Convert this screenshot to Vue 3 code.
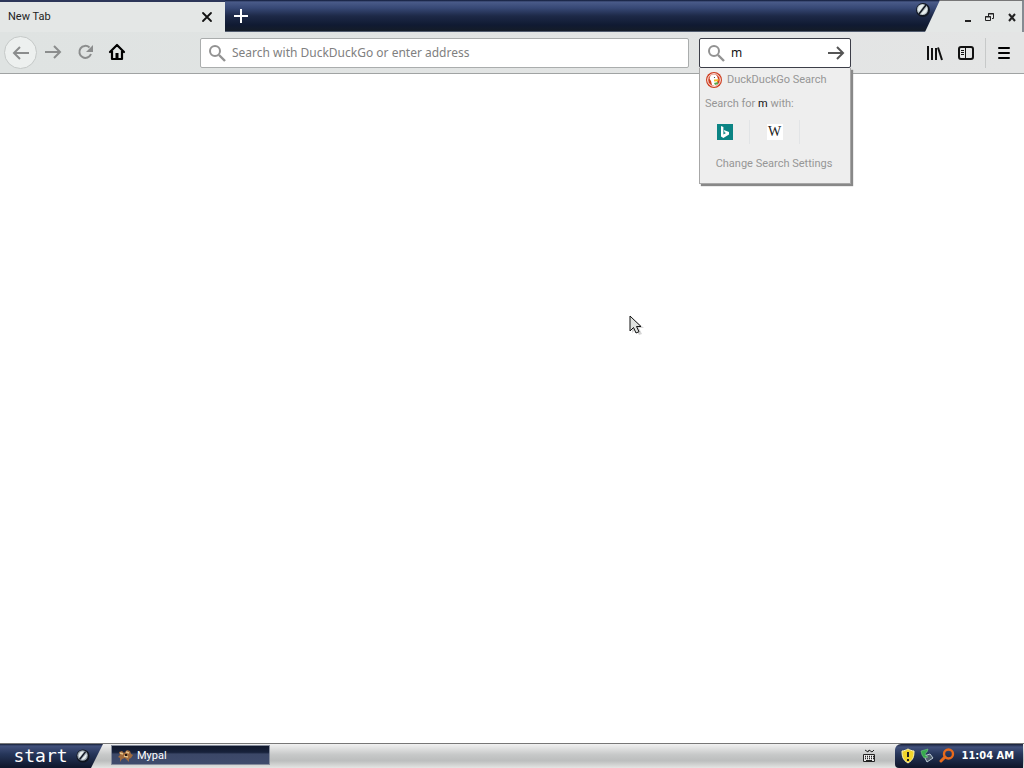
<script setup>
import { ref } from 'vue'
const address = ref('')
const query = ref('m')
</script>

<template>
  <div class="desktop">
    <main class="browser">
      <header class="titlebar">
        <div class="tab">
          <span>New Tab</span>
          <button class="tab-close" aria-label="Close tab">
            <svg width="12" height="12" viewBox="0 0 12 12"><path d="M2 2l8 8M10 2l-8 8" stroke="#111" stroke-width="1.8" stroke-linecap="round" /></svg>
          </button>
        </div>
        <div class="strip">
          <button class="new-tab" aria-label="Open a new tab">
            <svg width="16" height="16" viewBox="0 0 16 16"><path d="M8 1v14M1 8h14" stroke="#fff" stroke-width="2" /></svg>
          </button>
          <svg class="emblem" width="16" height="16" viewBox="0 0 16 16">
            <circle cx="8" cy="8" r="7" fill="#111723" />
            <circle cx="7.5" cy="7.5" r="5.5" fill="#b9c3c6" />
            <path d="M3 8C3 4 6 2 9 3L4 10zM6 12l6-7c1 4-2 8-6 7z" fill="#e8eeee" />
            <path d="M4 12L11 3" stroke="#10151f" stroke-width="1.5" />
          </svg>
        </div>
        <div class="window-buttons">
          <button aria-label="Minimize"><svg width="12" height="12" viewBox="0 0 12 12"><path d="M3 9h6" stroke="#222" stroke-width="2" /></svg></button>
          <button aria-label="Restore"><svg width="12" height="12" viewBox="0 0 12 12" fill="none" stroke="#222"><path d="M4.500 4V1.500h5v5H8M4 2h6" /><path d="M1.500 4.500h5v4h-5zM1 5h6" /></svg></button>
          <button aria-label="Close"><svg width="12" height="12" viewBox="0 0 12 12"><path d="M3 2l6 7M9 2L3 9" stroke="#222" stroke-width="2" /></svg></button>
        </div>
      </header>

      <nav class="toolbar">
        <div class="nav-buttons">
          <button class="back" aria-label="Back">
            <svg width="18" height="18" viewBox="0 0 18 18"><path d="M17 9H2M8 3L2 9l6 6" /></svg>
          </button>
          <button aria-label="Forward">
            <svg width="18" height="18" viewBox="0 0 18 18"><path d="M1 9h15M10 3l6 6-6 6" /></svg>
          </button>
          <button aria-label="Reload">
            <svg width="18" height="18" viewBox="0 0 18 18"><path d="M15 11a6 6 0 1 1-1.500-6.500" /><path d="M17 2v7h-7z" fill="#8b8d8d" stroke="none" /></svg>
          </button>
          <button aria-label="Home">
            <svg width="18" height="18" viewBox="0 0 18 18"><path d="M2 9l7-7 7 7M4 8v8h10V8" stroke="#000" stroke-width="2.200" stroke-linejoin="round" stroke-linecap="round" /><path d="M7.500 15v-5h3v5z" fill="#000" stroke="none" /></svg>
          </button>
        </div>
        <label class="field address">
          <svg width="18" height="18" viewBox="0 0 18 18"><circle cx="7" cy="7" r="5" /><path d="M11 11l6 6" stroke-width="2.400" /></svg>
          <input v-model="address" type="text" placeholder="Search with DuckDuckGo or enter address" aria-label="Address" />
        </label>
        <div class="search">
          <div class="field search-field">
            <svg width="18" height="18" viewBox="0 0 18 18"><circle cx="7" cy="7" r="5" /><path d="M11 11l6 6" stroke-width="2.400" /></svg>
            <input v-model="query" type="text" aria-label="Search" />
            <button class="go" aria-label="Go">
              <svg width="18" height="18" viewBox="0 0 18 18"><path d="M1 9h15M10 3l6 6-6 6" stroke="#555" stroke-width="2" /></svg>
            </button>
          </div>
          <section class="popup">
            <div class="engine">
              <svg width="16" height="16" viewBox="0 0 16 16">
                <circle cx="8" cy="8" r="8" fill="#cf3e20" />
                <circle cx="8" cy="8" r="6.300" fill="none" stroke="#fff" stroke-width="1" />
                <path d="M4 5c1-3 5-3 7-1l1 3-1 2 1 3-3 2-3-1-1-4c-1-1-2-3-1-4z" fill="#fff" />
                <path d="M8 7.500l5-.3-1 2-4 .3z" fill="#f6bd28" /><path d="M8 11l4-1v2l-3 1z" fill="#55a94b" />
                <circle cx="8.500" cy="5.500" r=".6" fill="#234" />
              </svg>
              <span>DuckDuckGo Search</span>
            </div>
            <p class="search-for">Search for <b>m</b> with:</p>
            <div class="engines">
              <button aria-label="Bing">
                <svg width="16" height="16" viewBox="0 0 16 16"><path d="M0 0h16v16H0z" fill="#0b8484" /><path d="M4 2l2.400.9v7.600L9 9 7.500 8.300 6.800 6 12 8v2.600L6.400 14 4 12.500z" fill="#fff" /></svg>
              </button>
              <button aria-label="Wikipedia"><span class="wiki">W</span></button>
            </div>
            <button class="settings">Change Search Settings</button>
          </section>
        </div>
        <div class="tools">
          <button aria-label="Library"><svg width="18" height="18" viewBox="0 0 18 18"><path d="M3 2v14M7 4v12M11 4v12M13 3.500L17 16" stroke="#111" stroke-width="2" /></svg></button>
          <button aria-label="Sidebars"><svg width="18" height="18" viewBox="0 0 18 18"><rect x="2" y="3" width="14" height="12" rx="2" stroke="#111" stroke-width="2" /><path d="M8.500 3v12" stroke="#111" stroke-width="1" /><path d="M4 6.500h3M4 8.500h3M4 10.500h3" stroke="#111" stroke-width="1" /></svg></button>
          <button class="menu" aria-label="Menu"><svg width="18" height="18" viewBox="0 0 18 18"><path d="M4 4h10M4 9h10M4 14h10" stroke="#000" stroke-width="2" stroke-linecap="round" /></svg></button>
        </div>
      </nav>

      <div class="page">
        <svg class="cursor" width="18" height="22" viewBox="0 0 18 22">
          <path d="M3 3v15l4-4 3 6 3-1-3-6h5z" fill="#888" opacity=".35" />
          <path d="M1 1v15l3.500-3.500L7 18l3-1.300-2.500-5.200H12z" fill="#dfe2df" stroke="#111" />
        </svg>
      </div>
    </main>

    <footer class="taskbar">
      <button class="start">
        <span>start</span>
        <svg width="14" height="14" viewBox="0 0 16 16">
          <circle cx="8" cy="8" r="7.500" fill="#10151f" />
          <circle cx="7.500" cy="7.500" r="6" fill="#9ba6b0" />
          <path d="M3 8C3 4 6 2 9 3L4 10zM6 12l6-7c1 4-2 8-6 7z" fill="#e8eeee" />
          <path d="M4 12L11 3" stroke="#10151f" stroke-width="1.500" />
        </svg>
      </button>
      <button class="task">
        <svg width="16" height="14" viewBox="0 0 16 14">
          <path d="M1 3l3-1 2 2 3-3 3 1 1 3 2 1-2 3-2 1v3l-2-2-2-2-3 1-2 3v-4l-2-1 2-2z" fill="#a06a3c" />
          <path d="M2 4l3 1M8 3l3 1M6 7l4 1" stroke="#e7c48a" stroke-width="1.500" /><path d="M7 5h2v2H7z" fill="#241814" />
        </svg>
        <span>Mypal</span>
      </button>
      <button class="keyboard" aria-label="Keyboard layout">
        <svg width="14" height="14" viewBox="0 0 14 14" fill="none" stroke="#222">
          <path d="M3 1l3 2 1-2 3 2 2-2" /><path d="M1.500 5.500h11v7h-11z" fill="#eee" /><path d="M3 7.500h9M3 9.500h9" stroke-dasharray="1 1" stroke-width="1.500" /><path d="M4 11.500h6" />
        </svg>
      </button>
      <div class="tray">
        <svg width="14" height="16" viewBox="0 0 14 16"><path d="M7 1c2 1 4 2 6 2 0 6-1 9-6 12C2 12 1 9 1 3c2 0 4-1 6-2z" fill="#f2d52c" stroke="#fff5b0" /><path d="M7 4v5M7 11v2" stroke="#222" stroke-width="2" /></svg>
        <svg width="16" height="16" viewBox="0 0 16 16"><path d="M5 8l6-2 3 4-6 4z" fill="#52616f" stroke="#bccbd7" /><path d="M2 3l7-2-1 3c-2 1-2 2-1 4l2 1-4 1-2-3z" fill="#36aa4d" stroke="#83d28a" stroke-width=".5" /></svg>
        <svg width="16" height="16" viewBox="0 0 16 16" fill="none" stroke="#e96a1b"><circle cx="9.500" cy="6" r="4.500" stroke-width="2.400" /><path d="M6 9l-4 4" stroke-width="3" stroke-linecap="round" /></svg>
        <time>11:04 AM</time>
      </div>
    </footer>
  </div>
</template>

<style>
body { margin: 0; }
</style>

<style scoped>
* { box-sizing: border-box; }
.desktop { display: flex; flex-direction: column; min-height: 100vh; background: #fff; color: #222; font: 11px/14px Roboto, sans-serif; }
button { display: flex; align-items: center; justify-content: center; padding: 0; border: 0; background: none; color: inherit; font: inherit; }
svg { flex: none; }
.browser { flex: 1; display: flex; flex-direction: column; }
.titlebar { display: flex; height: 32px; background: #e4e7e6; }
.tab { display: flex; align-items: center; justify-content: space-between; width: 225px; padding: 0 12px 0 8px; border-top: 2px solid #2c3659; }
.strip { display: flex; flex: 1; justify-content: space-between; padding: 2px 9px 0 7px; background: linear-gradient(#0d1734, #4a5b89 2px, #374875 8px, #1d2947 16px, #101a32 25px, #141c28 31px, #8e9bb5 32px); clip-path: polygon(0 0, 100% 0, calc(100% - 15px) 100%, 0 100%); }
.new-tab { width: 18px; height: 28px; }
.window-buttons { display: flex; align-items: center; gap: 10px; width: 84px; padding: 2px 4px 0 0; justify-content: flex-end; border-top: 1px solid #777; border-right: 2px solid #858b92; }
.toolbar { display: flex; align-items: center; height: 42px; padding: 0 2px 0 4px; background: linear-gradient(90deg, #dfe3e2, #e4e5e5); border-bottom: 1px solid #a0a3a3; }
.nav-buttons { display: flex; width: 196px; }
.nav-buttons button { width: 32px; height: 32px; }
.nav-buttons .back { width: 33px; height: 33px; border: 1px solid #c5c9c8; border-radius: 50%; background: #edf0ef; }
.nav-buttons svg { fill: none; stroke: #8b8d8d; stroke-width: 2; }
.field { display: flex; align-items: center; gap: 6px; height: 30px; padding: 0 7px; border: 1px solid #aaadad; border-radius: 2px; background: #fff; }
.field svg { fill: none; stroke: #929292; stroke-width: 2; }
.address { flex: 1; margin-right: 10px; }
input { flex: 1; width: 0; min-width: 0; padding: 0; border: 0; outline: 0; background: none; color: #111; font: 12px/18px "Noto Sans", sans-serif; }
input::placeholder { color: #808080; opacity: 1; }
.search { position: relative; width: 152px; }
.search-field { padding: 0 5px 0 7px; border-color: #3c3e48; }
.popup { position: absolute; z-index: 2; top: 100%; left: 0; right: 0; padding: 2px 0; border: 1px solid #a7a7a7; border-top: 0; background: #eee; box-shadow: 2px 2px 1px #888; color: #969696; }
.engine { display: flex; align-items: center; gap: 5px; height: 21px; padding-left: 6px; }
.search-for { margin: 0; padding: 6px 5px; }
.search-for b { color: #111; font-weight: 400; }
.engines { display: flex; align-items: center; height: 30px; }
.engines button { width: 50px; height: 24px; border-right: 1px solid #e2e4e6; }
.wiki { width: 16px; background: #fff; color: #222; font: 14px/16px "Liberation Serif", serif; }
.settings { width: 100%; height: 34px; padding-right: 2px; }
.tools { display: flex; align-items: center; justify-content: flex-end; width: 171px; }
.tools button { width: 32px; height: 30px; }
.tools svg { fill: none; }
.tools .menu { width: 37px; margin-left: 3px; border-left: 1px solid #c7c9c9; }
.page { position: relative; flex: 1; background: #fff; }
.cursor { position: absolute; top: 241px; left: 629px; }
.taskbar { display: flex; align-items: stretch; height: 25px; padding-right: 1px; border-top: 1px solid #777; background: linear-gradient(#f1f1f1, #c6c8c8 45%, #bcbebe 70%, #e4e5e3); color: #fff; }
.start { gap: 8px; width: 103px; background: linear-gradient(#172038, #42517c 2px, #26365a 10px, #10182d 23px); clip-path: polygon(0 0, 100% 0, calc(100% - 12px) 100%, 0 100%); }
.start span { font: 18px/20px "DejaVu Sans Mono", monospace; }
.task { justify-content: flex-start; gap: 3px; width: 159px; margin: 1px 0 3px 8px; padding: 1px 6px 0; border: 1px solid #858c9c; background: linear-gradient(#10182b, #17213b 35%, #3b4767 45%, #3f4b6c); }
.keyboard { width: 20px; margin-left: auto; margin-right: 16px; }
.tray { display: flex; align-items: center; gap: 4px; padding: 0 9px 0 6px; border-radius: 6px 0 0 4px; background: linear-gradient(#172038, #42517c 3px, #26365a 10px, #10182d 23px); }
.tray time { margin-left: 3px; font: 700 11px/14px "DejaVu Sans Condensed", "DejaVu Sans", sans-serif; }
</style>
